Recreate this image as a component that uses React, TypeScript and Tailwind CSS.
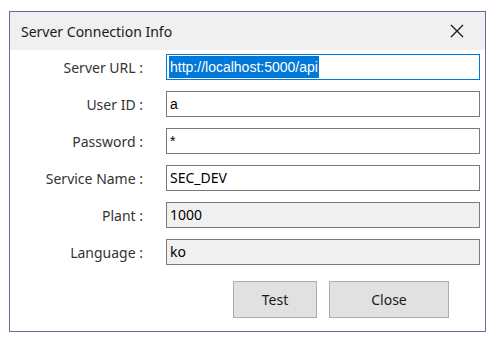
const font = { fontFamily: '"Noto Sans", "Open Sans", sans-serif' };
const sans = { fontFamily: '"Liberation Sans", Arial, sans-serif' };

type Field = {
  label: string;
  value: string;
  disabled?: boolean;
  selected?: boolean;
  plain?: boolean;
};

const fields: Field[] = [
  { label: "Server URL :", value: "http://localhost:5000/api", selected: true, plain: true },
  { label: "User ID :", value: "a", plain: true },
  { label: "Password :", value: "*", plain: true },
  { label: "Service Name :", value: "SEC_DEV" },
  { label: "Plant :", value: "1000", disabled: true },
  { label: "Language :", value: "ko", disabled: true },
];

function Row({ field }: { field: Field }) {
  const box = field.selected
    ? "border-[#0078d7] bg-white"
    : field.disabled
    ? "border-[#7a7a7a] bg-[#f0f0f0]"
    : "border-[#7a7a7a] bg-white";
  return (
    <div className="flex items-center h-[26px]">
      <div className="w-[136px] pr-[3px] text-right text-[14px] text-[#333333] whitespace-nowrap">
        {field.label}
      </div>
      <div className={`ml-[20px] w-[314px] h-[26px] border ${box} flex items-center px-[2px]`}>
        <span
          className={`${
            field.selected ? "bg-[#0078d7] text-white" : "text-black"
          } text-[14px] leading-[22px] px-[1px] whitespace-nowrap`}
          style={field.plain ? sans : undefined}
        >
          {field.value}
        </span>
      </div>
    </div>
  );
}

export default function App() {
  return (
    <div className="w-[495px] h-[342px] bg-white pt-[11px] pl-[9px]" style={font}>
      <div className="w-[477px] h-[321px] border border-[#5b6f9d] bg-white flex flex-col">
        <div className="h-[38px] bg-[#f0f0f0] flex items-center justify-between pl-[11px] pr-[21px]">
          <span className="text-[14px] text-[#1a1a1a]">Server Connection Info</span>
          <svg width="14" height="14" viewBox="0 0 14 14">
            <path d="M1 1 L13 13 M13 1 L1 13" stroke="#1a1a1a" strokeWidth="1.3" fill="none" />
          </svg>
        </div>
        <div className="pt-[4px] flex flex-col gap-[11px]">
          {fields.map((f) => (
            <Row key={f.label} field={f} />
          ))}
        </div>
        <div className="flex justify-end gap-[12px] pr-[36px] mt-[16px]">
          <button className="w-[84px] h-[37px] bg-[#e1e1e1] border border-[#adadad] text-[14px] text-[#1a1a1a]">
            Test
          </button>
          <button className="w-[120px] h-[37px] bg-[#e1e1e1] border border-[#adadad] text-[14px] text-[#1a1a1a]">
            Close
          </button>
        </div>
      </div>
    </div>
  );
}
